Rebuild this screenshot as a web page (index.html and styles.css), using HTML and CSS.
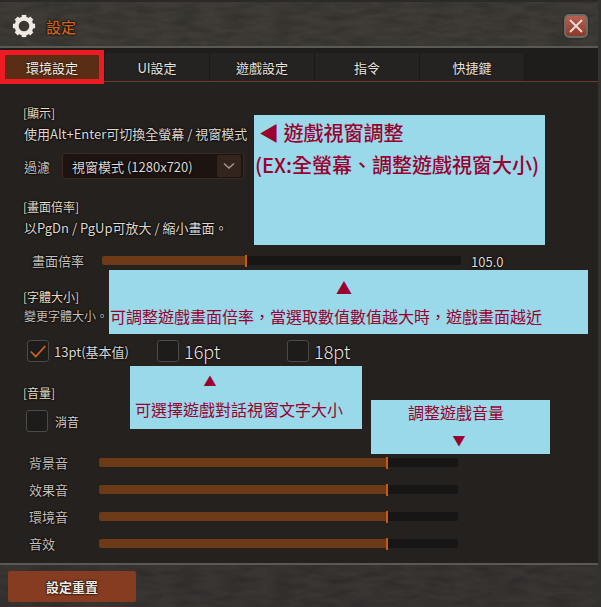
FILE: index.html
```html
<!DOCTYPE html>
<html lang="zh-Hant">
<head>
  <meta charset="UTF-8">
  <meta name="viewport" content="width=device-width, initial-scale=1.0">
  <title>設定</title>
  <link rel="stylesheet" href="styles.css">
</head>
<body>
  <svg class="defs" width="0" height="0">
    <filter id="grain">
      <feTurbulence type="fractalNoise" baseFrequency="0.04 0.16" numOctaves="4" seed="4"/>
      <feColorMatrix values="0 0 0 0 0  0 0 0 0 0  0 0 0 0 0  0 0 0 1.1 -0.35"/>
    </filter>
  </svg>

  <div class="window">
    <header class="titlebar">
      <svg class="grain" width="100%" height="100%"><rect width="100%" height="100%" filter="url(#grain)"/></svg>
      <svg class="gear" width="24" height="24" viewBox="0 0 26 26">
        <circle cx="13" cy="13" r="8" fill="none" stroke="#efe9e2" stroke-width="4.4"/>
        <g fill="#efe9e2">
          <rect x="10.5" y="1" width="5" height="5"/>
          <rect x="10.5" y="20" width="5" height="5"/>
          <rect x="1" y="10.5" width="5" height="5"/>
          <rect x="20" y="10.5" width="5" height="5"/>
          <rect x="10.5" y="1" width="5" height="5" transform="rotate(45 13 13)"/>
          <rect x="10.5" y="20" width="5" height="5" transform="rotate(45 13 13)"/>
          <rect x="1" y="10.5" width="5" height="5" transform="rotate(45 13 13)"/>
          <rect x="20" y="10.5" width="5" height="5" transform="rotate(45 13 13)"/>
        </g>
      </svg>
      <span class="title">設定</span>
      <button class="close">
        <svg width="16" height="16" viewBox="0 0 16 16">
          <path d="M2 2L14 14M14 2L2 14" stroke="#f0dcd6" stroke-width="1.8"/>
        </svg>
      </button>
    </header>

    <nav class="tabs">
      <div class="tab active">環境設定</div>
      <div class="tab">UI設定</div>
      <div class="tab">遊戲設定</div>
      <div class="tab">指令</div>
      <div class="tab">快捷鍵</div>
    </nav>

    <main class="content">
      <div class="heading">[顯示]</div>
      <div class="desc">使用Alt+Enter可切換全螢幕 / 視窗模式</div>
      <div class="filter-row">
        <span class="filter-label">過濾</span>
        <div class="select">
          <span class="select-text">視窗模式 (1280x720)</span>
          <span class="select-arrow">
            <svg width="12" height="8" viewBox="0 0 12 8"><path d="M1 1.5L6 6L11 1.5" fill="none" stroke="#a39a90" stroke-width="1.5"/></svg>
          </span>
        </div>
      </div>

      <div class="heading heading-zoom">[畫面倍率]</div>
      <div class="desc">以PgDn / PgUp可放大 / 縮小畫面。</div>
      <div class="slider slider-zoom">
        <span class="slider-label">畫面倍率</span>
        <div class="track"><div class="fill" style="width: 39.8%"></div></div>
        <span class="slider-value">105.0</span>
      </div>

      <div class="heading heading-font">[字體大小]</div>
      <div class="desc desc-font">變更字體大小。</div>
      <div class="font-row">
        <div class="check-item item-13">
          <span class="box">
            <svg width="22" height="22" viewBox="0 0 22 22"><path d="M3 11.5L8.5 17L19 5.5" fill="none" stroke="#d9651a" stroke-width="1.8"/></svg>
          </span>
          <span class="check-small">13pt(基本值)</span>
        </div>
        <div class="check-item item-16">
          <span class="box"></span>
          <span class="check-big">16pt</span>
        </div>
        <div class="check-item">
          <span class="box"></span>
          <span class="check-big">18pt</span>
        </div>
      </div>

      <div class="heading heading-volume">[音量]</div>
      <div class="check-item mute">
        <span class="box"></span>
        <span class="check-small">消音</span>
      </div>

      <div class="volumes">
        <div class="slider slider-volume">
          <span class="slider-label">背景音</span>
          <div class="track"><div class="fill" style="width: 80%"></div></div>
        </div>
        <div class="slider slider-volume">
          <span class="slider-label">效果音</span>
          <div class="track"><div class="fill" style="width: 80%"></div></div>
        </div>
        <div class="slider slider-volume">
          <span class="slider-label">環境音</span>
          <div class="track"><div class="fill" style="width: 80%"></div></div>
        </div>
        <div class="slider slider-volume">
          <span class="slider-label">音效</span>
          <div class="track"><div class="fill" style="width: 80%"></div></div>
        </div>
      </div>
    </main>

    <footer class="footer">
      <svg class="grain" width="100%" height="100%"><rect width="100%" height="100%" filter="url(#grain)"/></svg>
      <button class="reset">設定重置</button>
    </footer>

    <!-- annotations pasted on top of the screenshot -->
    <div class="red-frame"></div>
    <div class="note note-window">
      <div class="note-line-a">◀ 遊戲視窗調整</div>
      <div class="note-line-b">(EX:全螢幕、調整遊戲視窗大小)</div>
    </div>
    <div class="note note-zoom">
      <div class="arrow">▲</div>
      <div class="note-text">可調整遊戲畫面倍率，當選取數值數值越大時，遊戲畫面越近</div>
    </div>
    <div class="note note-font">
      <div class="arrow">▲</div>
      <div class="note-text">可選擇遊戲對話視窗文字大小</div>
    </div>
    <div class="note note-volume">
      <div class="note-text">調整遊戲音量</div>
      <div class="arrow">▼</div>
    </div>
  </div>
</body>
</html>
```

FILE: styles.css
```css
body {
  margin: 0;
  background: #1b1917;
  font-family: "Noto Sans CJK TC", "Noto Sans", sans-serif;
  color: #ddd8d2;
  overflow: hidden;
}
.defs {
  position: absolute;
}
.window {
  position: relative;
  width: 601px;
  height: 607px;
  display: flex;
  flex-direction: column;
  box-sizing: border-box;
  background: #25211e;
  border-right: 3px solid #34322e;
}
.grain {
  position: absolute;
  top: 0;
  left: 0;
  opacity: 0.3;
}

/* title */
.titlebar {
  position: relative;
  height: 48px;
  display: flex;
  align-items: center;
  padding: 4px 10px 0 12px;
  box-sizing: border-box;
  background: #3f3c37;
  border-top: 2px solid #2c2a27;
  border-bottom: 2px solid #5a5a52;
}
.gear {
  position: relative;
}
.title {
  position: relative;
  margin-left: 10px;
  font-size: 15px;
  font-weight: 500;
  color: #c8651f;
  text-shadow: 0 0 2px #000, 0 0 2px #000;
}
.close {
  position: relative;
  margin-left: auto;
  width: 24px;
  height: 24px;
  padding: 0;
  display: flex;
  align-items: center;
  justify-content: center;
  background: linear-gradient(#b8604f, #8a3a2b);
  border: 2px solid #6c6a66;
  border-radius: 5px;
  box-shadow: 0 0 2px #111;
}

/* tabs */
.tabs {
  display: flex;
  height: 34px;
  padding-top: 5px;
  box-sizing: border-box;
  background: #1f1d1b;
  border-bottom: 1px solid #6b3c28;
}
.tab {
  width: 105px;
  display: flex;
  align-items: center;
  justify-content: center;
  font-size: 13px;
  color: #e8e4df;
  background: #242321;
  border-right: 1px solid #1a1917;
  box-sizing: border-box;
  text-shadow: 0 0 2px #000;
}
.tab.active {
  background: #5a2e14;
  color: #f3efe9;
}

/* content */
.content {
  flex: 1;
  padding: 23px 0 0 24px;
  text-shadow: 0 0 2px #000, 0 0 2px #000;
}
.heading {
  height: 16px;
  line-height: 16px;
  font-size: 12px;
  color: #e8dcc0;
  margin-left: -1px;
}
.heading-zoom {
  margin-top: 20px;
}
.heading-font {
  margin-top: 21px;
}
.heading-volume {
  margin-top: 23px;
}
.desc {
  height: 16px;
  line-height: 16px;
  margin-top: 5px;
  font-size: 13px;
  white-space: nowrap;
}
.desc-font {
  margin-top: 3px;
  font-size: 12px;
  color: #c4bfb8;
}
.filter-row {
  display: flex;
  align-items: center;
  margin-top: 11px;
}
.filter-label {
  width: 38px;
  font-size: 13px;
  color: #c4bfb8;
}
.select {
  width: 182px;
  height: 26px;
  display: flex;
  align-items: center;
  justify-content: space-between;
  padding: 0 2px 0 9px;
  box-sizing: border-box;
  background: #1d1412;
  border: 1px solid #3a2a20;
  border-radius: 3px;
  font-size: 13px;
}
.select-arrow {
  width: 24px;
  height: 22px;
  display: flex;
  align-items: center;
  justify-content: center;
  background: #33241d;
  border-radius: 2px;
}

/* sliders */
.slider {
  display: flex;
  align-items: center;
  height: 15px;
}
.slider-zoom {
  margin: 17px 0 0 8px;
}
.slider-volume {
  margin-left: 5px;
}
.slider-label {
  width: 70px;
  flex: none;
  font-size: 13px;
  color: #c4bfb8;
}
.track {
  position: relative;
  width: 359px;
  height: 9px;
  background: #171614;
  border-radius: 2px;
}
.fill {
  position: relative;
  height: 100%;
  background: #6d3a17;
  border-radius: 2px 0 0 2px;
}
.fill::after {
  content: "";
  position: absolute;
  right: -2px;
  top: -1px;
  bottom: -2px;
  width: 2px;
  background: #c55a16;
}
.slider-value {
  margin: 2px 0 0 10px;
  font-size: 13px;
}
.volumes {
  display: flex;
  flex-direction: column;
  gap: 12px;
  margin-top: 23px;
}

/* font size options */
.font-row {
  display: flex;
  margin: 16px 0 0 3px;
}
.check-item {
  display: flex;
  align-items: center;
  height: 22px;
}
.item-13 {
  width: 130px;
}
.item-16 {
  width: 130px;
}
.box {
  width: 22px;
  height: 22px;
  flex: none;
  box-sizing: border-box;
  background: #1e1c1a;
  border: 1px solid #4c4a47;
  border-radius: 3px;
  display: flex;
  align-items: center;
  justify-content: center;
}
.check-small {
  margin-left: 5px;
  font-size: 13px;
  white-space: nowrap;
}
.check-big {
  margin-left: 5px;
  font-size: 18px;
  font-weight: 300;
  color: #eeeae5;
}
.mute {
  margin: 9px 0 0 2px;
}
.mute .check-small {
  margin-left: 7px;
  font-size: 12px;
}

/* footer */
.footer {
  position: relative;
  height: 44px;
  padding: 6px 0 0 8px;
  box-sizing: border-box;
  background: #393533;
  border-top: 2px solid #5a5a52;
}
.reset {
  position: relative;
  width: 128px;
  height: 31px;
  padding: 0;
  font-family: inherit;
  font-size: 13px;
  font-weight: 700;
  color: #f2e9e2;
  background: #853c20;
  border: 0;
  border-radius: 2px;
  text-shadow: 0 0 2px #000, 0 0 2px #000;
}

/* annotations */
.red-frame {
  position: absolute;
  left: 0;
  top: 50px;
  width: 104px;
  height: 34px;
  box-sizing: border-box;
  border: 5px solid #ed1c24;
}
.note {
  position: absolute;
  background: #99d9ea;
  color: #990030;
  box-sizing: border-box;
}
.note-window {
  left: 254px;
  top: 115px;
  width: 291px;
  height: 130px;
  font-size: 20px;
  font-weight: 500;
}
.note-line-a {
  margin: 4px 0 0 5px;
  line-height: 28px;
}
.note-line-b {
  margin: 4px 0 0 1px;
  line-height: 28px;
  white-space: nowrap;
}
.note-zoom {
  left: 109px;
  top: 270px;
  width: 479px;
  height: 64px;
}
.note-font {
  left: 130px;
  top: 366px;
  width: 232px;
  height: 63px;
}
.note-volume {
  left: 371px;
  top: 400px;
  width: 179px;
  height: 54px;
}
.note-text {
  font-size: 16px;
  line-height: 24px;
  white-space: nowrap;
}
.arrow {
  font-size: 16px;
  line-height: 24px;
  text-align: center;
}
.note-zoom .arrow {
  margin: 5px 0 0 -9px;
}
.note-zoom .note-text {
  margin: 5px 0 0 1px;
}
.note-font .arrow {
  margin-top: 3px;
  width: 160px;
  font-size: 13px;
}
.note-font .note-text {
  margin: 4px 0 0 5px;
}
.note-volume .note-text {
  margin-left: 37px;
}
.note-volume .arrow {
  margin: 4px 0 0 0;
  font-size: 13px;
  width: 176px;
}
```
